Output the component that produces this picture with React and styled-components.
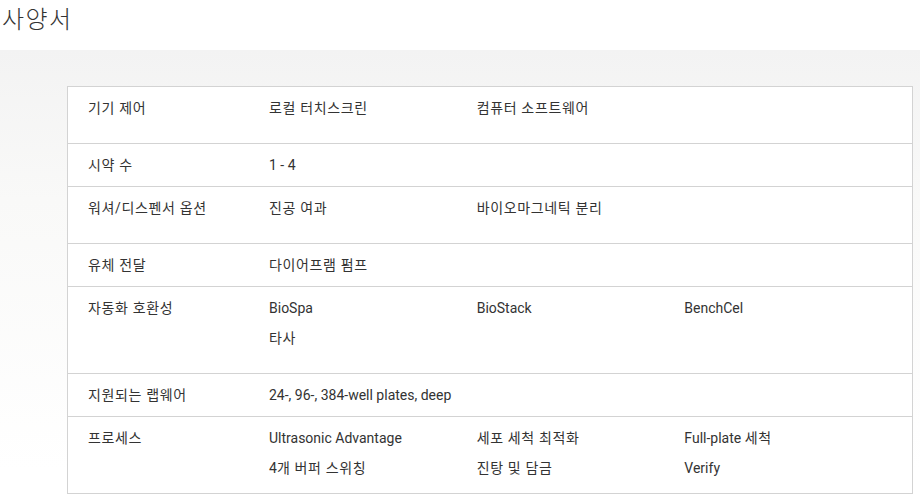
import React from "react";
import styled, { createGlobalStyle } from "styled-components";

const Global = createGlobalStyle`
  html, body { margin: 0; padding: 0; background: #fff; }
  body { font-family: Roboto, "Noto Sans CJK KR", sans-serif; color: #333; }
`;

const Page = styled.div`
  width: 920px;
  min-height: 499px;
`;

const TitleBar = styled.header`
  height: 50px;
  padding: 0 0 0 2px;
  box-sizing: border-box;
`;

const Title = styled.h1`
  margin: 0;
  line-height: normal;
  font-size: 24px;
  font-weight: 300;
  letter-spacing: 1.4px;
  color: #333;
  font-family: "Noto Sans CJK KR", Roboto, sans-serif;
`;

const Band = styled.section`
  background: linear-gradient(#f3f3f3 0px, #f9f9f8 150px, #ffffff 420px);
  padding: 36px 8px 6px 67px;
`;

const Table = styled.div`
  width: 846px;
  box-sizing: border-box;
  border: 1px solid #d3d3d3;
  background: #fff;
`;

const Row = styled.div`
  display: grid;
  grid-template-columns: 181px repeat(3, 1fr);
  padding: 11px 20px ${(p) => p.$pb}px 20px;
  font-size: 14px;
  line-height: 20px;
  border-bottom: ${(p) => (p.$last ? "none" : "1px solid #d3d3d3")};
`;

const Label = styled.div`
  color: #333;
`;

const Cell = styled.div`
  display: flex;
  flex-direction: column;
  gap: 10px;
  color: #333;
`;

const Wide = styled.div`
  grid-column: 2 / span 3;
  color: #333;
`;

const Hangul = styled.span`
  letter-spacing: 0.65px;
`;

function Txt({ children }) {
  const parts = String(children).split(/([\uac00-\ud7a3]+(?:[ \/][\uac00-\ud7a3]+)*)/);
  return (
    <>
      {parts.map((p, i) =>
        /[\uac00-\ud7a3]/.test(p) ? <Hangul key={i}>{p}</Hangul> : p
      )}
    </>
  );
}

const rows = [
  { label: "기기 제어", cols: [["로컬 터치스크린"], ["컴퓨터 소프트웨어"]], pb: 25 },
  { label: "시약 수", wide: "1 - 4", pb: 11 },
  { label: "워셔/디스펜서 옵션", cols: [["진공 여과"], ["바이오마그네틱 분리"]], pb: 25 },
  { label: "유체 전달", wide: "다이어프램 펌프", pb: 11 },
  { label: "자동화 호환성", cols: [["BioSpa", "타사"], ["BioStack"], ["BenchCel"]], pb: 25 },
  { label: "지원되는 랩웨어", wide: "24-, 96-, 384-well plates, deep", pb: 11 },
  {
    label: "프로세스",
    cols: [
      ["Ultrasonic Advantage", "4개 버퍼 스위칭"],
      ["세포 세척 최적화", "진탕 및 담금"],
      ["Full-plate 세척", "Verify"],
    ],
    pb: 15,
  },
];

export default function App() {
  return (
    <>
      <Global />
      <Page>
        <TitleBar>
          <Title>사양서</Title>
        </TitleBar>
        <Band>
          <Table>
            {rows.map((r, i) => (
              <Row key={r.label} $pb={r.pb} $last={i === rows.length - 1}>
                <Label><Txt>{r.label}</Txt></Label>
                {r.wide ? (
                  <Wide><Txt>{r.wide}</Txt></Wide>
                ) : (
                  r.cols.map((c, j) => (
                    <Cell key={j}>
                      {c.map((t) => (
                        <span key={t}><Txt>{t}</Txt></span>
                      ))}
                    </Cell>
                  ))
                )}
              </Row>
            ))}
          </Table>
        </Band>
      </Page>
    </>
  );
}
